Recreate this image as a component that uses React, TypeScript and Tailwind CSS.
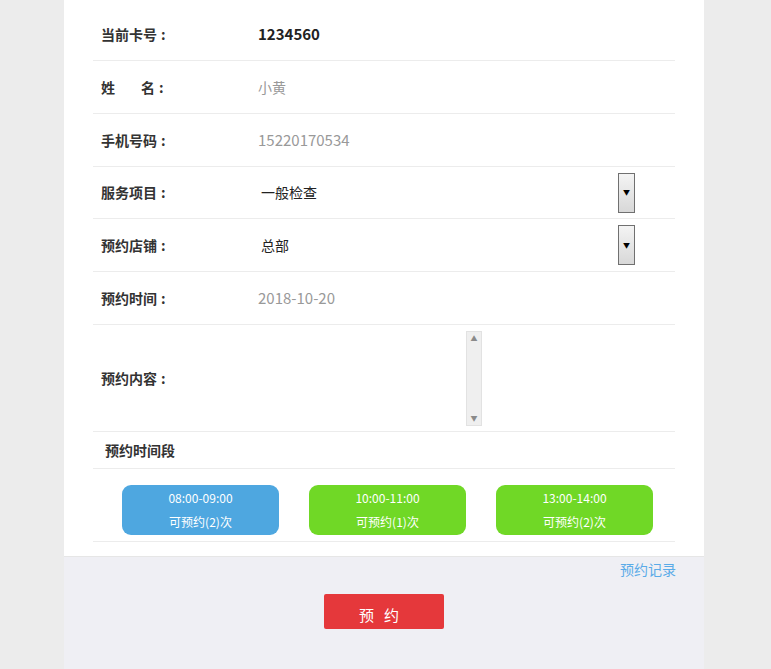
const font = { fontFamily: '"Noto Sans CJK SC", "Liberation Sans", sans-serif' };

function Label({ children }: { children: React.ReactNode }) {
  return (
    <div className="w-[165px] shrink-0 pl-2 text-[14px] font-bold text-[#333]">
      {children}
      <span className="ml-[4px]">:</span>
    </div>
  );
}

function DropButton() {
  return (
    <div className="flex h-[40px] w-[17px] items-center justify-center border border-[#707070] bg-gradient-to-b from-[#f4f4f4] to-[#d8d8d8]">
      <span className="text-[7px] leading-none text-black">▼</span>
    </div>
  );
}

const slots = [
  { time: "08:00-09:00", left: 2, color: "bg-[#4ea7e0]" },
  { time: "10:00-11:00", left: 1, color: "bg-[#70d826]" },
  { time: "13:00-14:00", left: 2, color: "bg-[#70d826]" },
];

export default function App() {
  return (
    <div className="min-h-[669px] bg-[#ececec] pl-[64px]" style={font}>
      <div className="w-[640px]">
        <div className="bg-white px-[29px]">
          <div className="flex h-[61px] items-center border-b border-[#ececec] pt-[8px]">
            <Label>当前卡号</Label>
            <span className="text-[15px] font-bold text-[#222]">1234560</span>
          </div>
          <div className="flex h-[53px] items-center border-b border-[#ececec]">
            <Label>
              姓<span className="inline-block w-[26px]" />名
            </Label>
            <span className="text-[14px] text-[#999]">小黄</span>
          </div>
          <div className="flex h-[53px] items-center border-b border-[#ececec]">
            <Label>手机号码</Label>
            <span className="text-[15px] text-[#999]">15220170534</span>
          </div>
          <div className="flex h-[52px] items-center border-b border-[#ececec]">
            <Label>服务项目</Label>
            <span className="flex-1 pl-[3px] text-[14px] text-[#222]">一般检查</span>
            <div className="mr-[40px]">
              <DropButton />
            </div>
          </div>
          <div className="flex h-[53px] items-center border-b border-[#ececec]">
            <Label>预约店铺</Label>
            <span className="flex-1 pl-[3px] text-[14px] text-[#222]">总部</span>
            <div className="mr-[40px]">
              <DropButton />
            </div>
          </div>
          <div className="flex h-[53px] items-center border-b border-[#ececec]">
            <Label>预约时间</Label>
            <span className="text-[15px] text-[#999]">2018-10-20</span>
          </div>
          <div className="flex h-[107px] items-center border-b border-[#ececec]">
            <Label>预约内容</Label>
            <div className="flex h-[95px] w-[224px] justify-end">
              <div className="flex w-[16px] flex-col items-center justify-between border border-[#e2e2e2] bg-[#efefef] py-[3px]">
                <span className="text-[7px] leading-none text-[#8a8a8a]">▲</span>
                <span className="text-[7px] leading-none text-[#8a8a8a]">▼</span>
              </div>
            </div>
          </div>
          <div className="flex h-[37px] items-center border-b border-[#ececec] pl-[12px] text-[14px] font-bold text-[#333]">
            预约时间段
          </div>
          <div className="flex gap-[30px] border-b border-[#ececec] pb-[6px] pl-[29px] pt-[16px]">
            {slots.map((s) => (
              <div
                key={s.time}
                className={`flex h-[50px] w-[157px] flex-col items-center justify-center gap-[6px] rounded-[9px] text-[12px] leading-[18px] text-white ${s.color}`}
              >
                <span>{s.time}</span>
                <span>可预约({s.left})次</span>
              </div>
            ))}
          </div>
          <div className="h-[14px]" />
        </div>
        <div className="border-t border-[#e6e6e6] bg-[#efeff4] pb-[40px]">
          <div className="flex justify-end pr-[28px] pt-[2px]">
            <span className="text-[14px] leading-[20px] text-[#5aabe8]">预约记录</span>
          </div>
          <div className="mt-[15px] flex justify-center">
            <button className="h-[35px] w-[120px] rounded-[2px] bg-[#e5383b] pt-[8px] text-[15px] tracking-[10px] text-white">
              预约
            </button>
          </div>
        </div>
      </div>
    </div>
  );
}
